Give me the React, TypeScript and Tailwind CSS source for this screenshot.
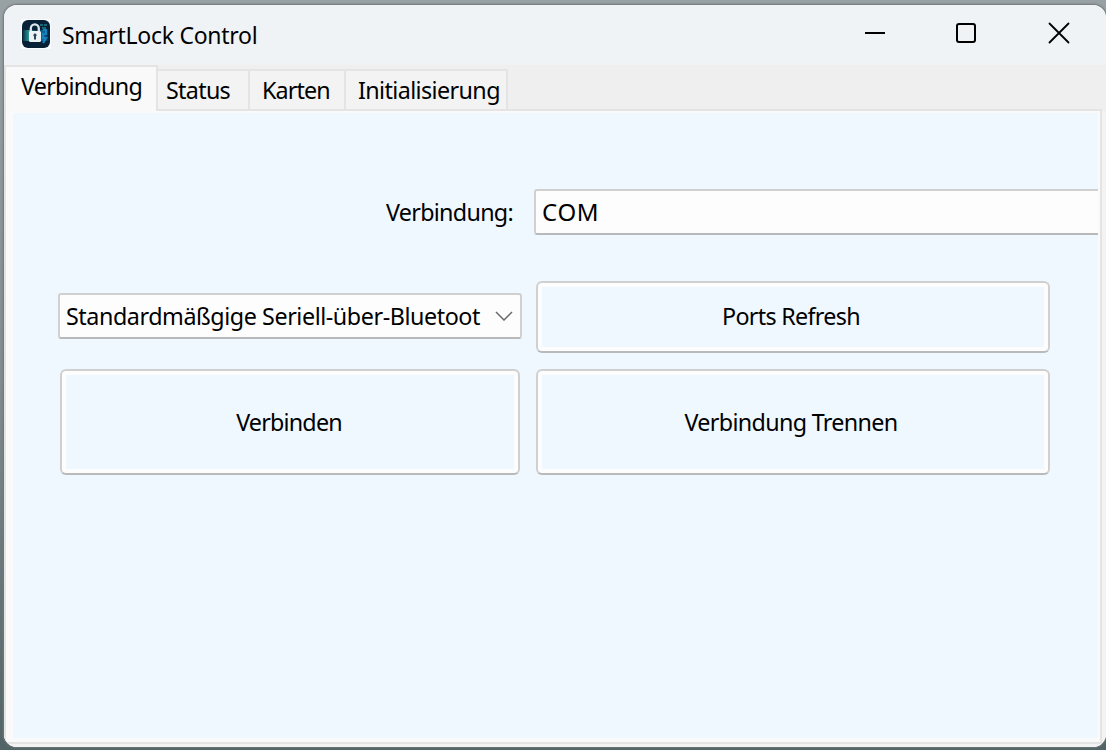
import type { ReactNode } from "react";

function LockLogo() {
  return (
    <svg className="h-[30px] w-[30px] shrink-0" viewBox="0 0 30 30">
      <defs>
        <linearGradient id="teal" x1="0" y1="0" x2="1" y2="0">
          <stop offset="0" stopColor="#0b3547" />
          <stop offset="0.25" stopColor="#2aa39c" />
          <stop offset="0.5" stopColor="#0c2c48" />
          <stop offset="0.78" stopColor="#0b6a9c" />
          <stop offset="1" stopColor="#082338" />
        </linearGradient>
      </defs>
      <rect width="30" height="30" fill="#fafcfd" />
      <rect x="1" y="1" width="28" height="28" rx="6" fill="#092137" />
      <rect x="2" y="11" width="26" height="11" fill="url(#teal)" />
      <path d="M19 6h3m1 0h3M21 9h4" stroke="#1c7f8e" strokeWidth="1.6" />
      <path d="M22 11h3v4h-3v4h3l-3 5" fill="none" stroke="#1581bd" strokeWidth="2.2" />
      <path d="M9.8 13V9.500a4 4.200 0 0 1 8 0V13" fill="none" stroke="#dce5ea" strokeWidth="2.3" />
      <rect x="8" y="12" width="12" height="11" rx="1.5" fill="#edf2f4" />
      <path d="M14 14.500a1.700 1.700 0 0 1 1 3v3h-2v-3a1.700 1.700 0 0 1 1-3" fill="#264758" />
    </svg>
  );
}

function Tab({ className, children }: { className: string; children: ReactNode }) {
  return (
    <button
      className={`h-[40px] shrink-0 whitespace-nowrap border-r-2 border-t-2 border-[#e4e4e4] bg-[#f3f3f3] text-left ${className}`}
    >
      {children}
    </button>
  );
}

function PushButton({ className, children }: { className: string; children: ReactNode }) {
  return (
    <button
      className={`rounded-[6px] border-2 border-[#d0d0d0] border-b-[#bababa] bg-[#eff7ff] shadow-[inset_0_0_0_4px_#fdfdfd] ${className}`}
    >
      {children}
    </button>
  );
}

export default function App() {
  return (
    <div className="h-[750px] w-[1106px] overflow-hidden bg-linear-to-b from-[#98a1a4] via-[#828d91] to-[#526466] pl-1 pt-[5px] font-['Noto_Sans','Open_Sans',sans-serif] text-[23.3px] leading-[30px] text-black">
      <div className="flex h-[742px] w-[1102px] flex-col overflow-hidden rounded-[13px] bg-[#f9f9f9] shadow-[0_0_2px_1px_#6f7678]">
        <header className="flex h-[60px] shrink-0 items-start bg-[#eff3f6] pl-[17px] pt-[14px]">
          <LockLogo />
          <h1 className="ml-[11px] mt-[1px] whitespace-nowrap text-[23px] tracking-[-0.27px]">SmartLock Control</h1>
          <div className="ml-auto flex pr-[36px] pt-[3px]">
            <svg className="h-[22px] w-[206px]" viewBox="0 0 206 22" fill="none" stroke="#000" strokeWidth="2">
              <path d="M1 11h20" />
              <rect x="93" y="2" width="18" height="18" rx="2" />
              <path d="m185.500 1.500 19 19m0-19-19 19" strokeLinecap="round" strokeWidth="1.800" />
            </svg>
          </div>
        </header>

        <nav className="flex h-[46px] shrink-0 items-end bg-[#efefef] pr-1">
          <button className="h-[46px] w-[154px] shrink-0 whitespace-nowrap border-l-2 border-r-2 border-t-2 border-[#e4e4e4] bg-[#f9f9f9] pb-[6px] pl-[15px] text-left tracking-[-0.75px]">
            Verbindung
          </button>
          <div className="flex grow border-b-2 border-[#e4e4e4]">
            <Tab className="w-[92px] pl-[8px] tracking-[-0.7px]">Status</Tab>
            <Tab className="w-[96px] pl-[12px] tracking-[-0.9px]">Karten</Tab>
            <Tab className="w-[162px] pl-[12px] tracking-[-0.6px]">Initialisierung</Tab>
          </div>
        </nav>

        <div className="flex grow border-b-[3px] border-[#f3f3f3] bg-[#f3f3f3] pr-1">
          <main className="grow border-b-2 border-l-2 border-r-2 border-[#e4e4e4] bg-[#fafafa] pb-[4px] pl-[7px] pr-[2px] pt-[2px]">
            <div className="flex h-full flex-col bg-[#eff7ff] pt-[76px]">
              <div className="flex h-[46px] items-center">
                <label className="w-[521px] shrink-0 pl-[373px] tracking-[-0.7px]">Verbindung:</label>
                <div className="flex h-[46px] grow items-center rounded-l-[3px] border-y-2 border-l-2 border-[#d0d0d0] border-b-[#b7b9bb] bg-[#fdfdfd] pl-[6px] text-[24px] tracking-[0.7px]">
                  COM
                </div>
              </div>
              <div className="mt-[46px] flex h-[72px] items-start pl-[45px]">
                <div className="mt-[12px] flex h-[46px] w-[464px] items-center justify-between rounded-[3px] border-2 border-[#d0d0d0] border-b-[#b7b9bb] bg-[#fdfdfd] pl-[6px] pr-[7px]">
                  <span className="whitespace-nowrap tracking-[-0.43px]">Standardmäßgige Seriell-über-Bluetoot</span>
                  <svg className="h-[10px] w-[18px] shrink-0" viewBox="0 0 18 10" fill="none" stroke="#6b6b6b" strokeWidth="1.500">
                    <path d="m1 1 8 8 8-8" />
                  </svg>
                </div>
                <PushButton className="ml-[14px] h-[72px] w-[514px] pb-[2px] pr-[4px] tracking-[-0.7px]">Ports Refresh</PushButton>
              </div>
              <div className="mt-[16px] flex h-[106px] pl-[47px]">
                <PushButton className="w-[460px] pr-[2px] tracking-[-0.8px]">Verbinden</PushButton>
                <PushButton className="ml-[16px] w-[514px] pr-[4px] tracking-[-0.66px]">Verbindung Trennen</PushButton>
              </div>
            </div>
          </main>
        </div>
      </div>
    </div>
  );
}
